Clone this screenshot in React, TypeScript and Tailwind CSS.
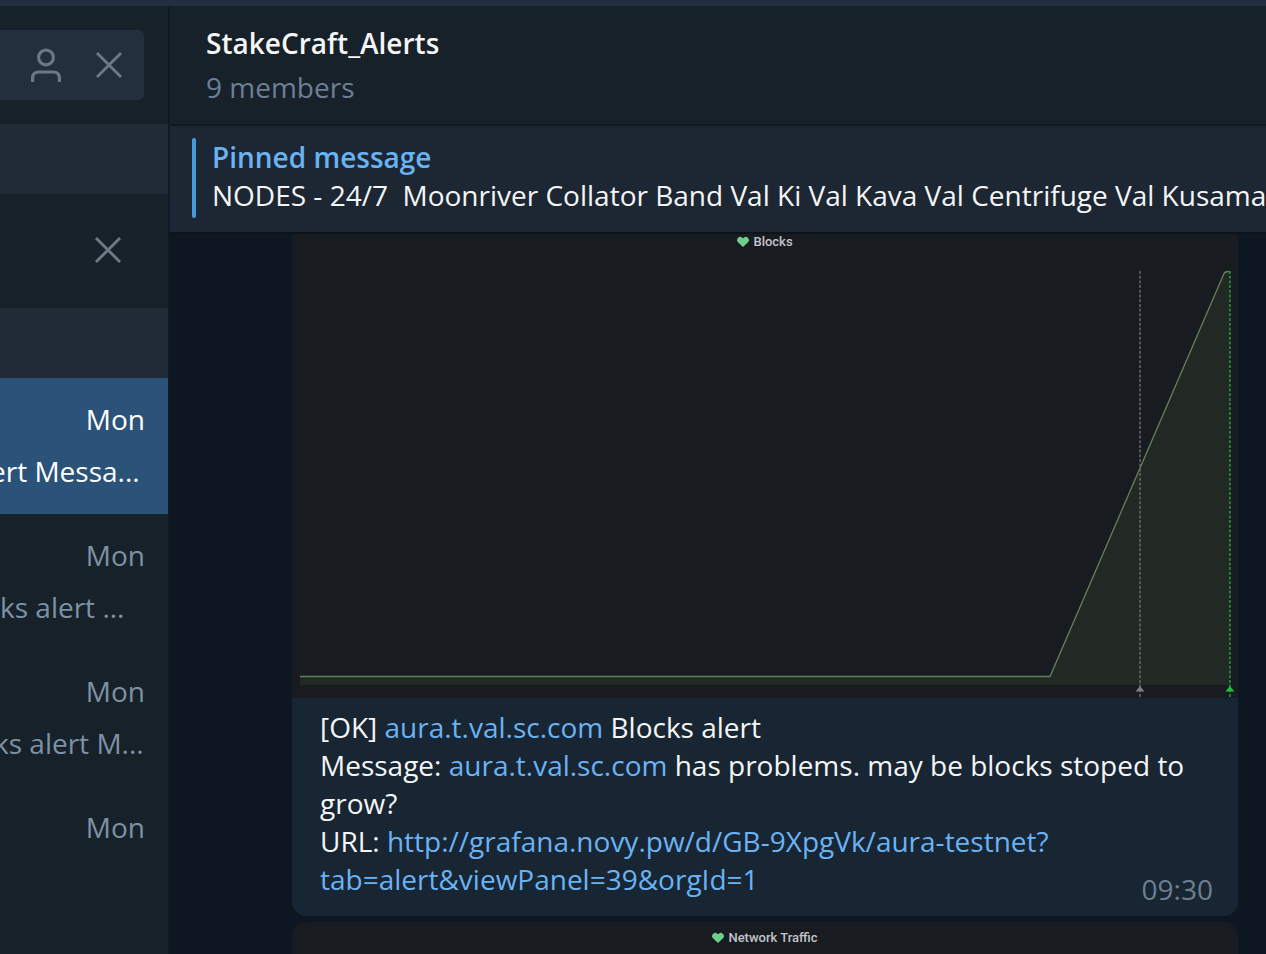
import React from "react";

type Chat = { day: string; preview: string; shift: string; active?: boolean };

const chats: Chat[] = [
  { day: "Mon", preview: "ert Messa...", shift: "-ml-2.5", active: true },
  { day: "Mon", preview: "ks alert ...", shift: "ml-0" },
  { day: "Mon", preview: "ks alert M...", shift: "-ml-1.5" },
  { day: "Mon", preview: "", shift: "ml-0" },
  { day: "Mon", preview: "", shift: "ml-0" },
];

function Cross() {
  return (
    <svg className="block size-8" viewBox="0 0 32 32" fill="none" stroke="currentColor" strokeWidth="2.9" aria-hidden="true">
      <path d="M4 4 L28 28 M28 4 L4 28" />
    </svg>
  );
}

function Person() {
  return (
    <svg className="block h-9 w-8" viewBox="0 0 32 36" fill="none" stroke="currentColor" strokeWidth="3.2" aria-hidden="true">
      <circle cx="16" cy="10.400" r="7.4" />
      <path d="M2.6 35 V31 Q2.6 25 9 25 H23 Q29.4 25 29.4 31 V35" />
    </svg>
  );
}

function Heart() {
  return (
    <svg className="block h-3 w-3" viewBox="0 0 12 12" fill="#6ccf8e" aria-hidden="true">
      <path d="M6 11 L1 6.3 A3.1 3.1 0 0 1 1 2 A3 3 0 0 1 5.3 1.700 L6 2.2 L6.7 1.700 A3 3 0 0 1 11 2 A3.1 3.1 0 0 1 11 6.3 Z" />
    </svg>
  );
}

function PanelTitle({ children }: { children: string }) {
  return (
    <div className="flex items-center justify-center gap-1 font-[Roboto] text-[13px] leading-[15px] font-medium text-[#c3c4cc]">
      <Heart />
      {children}
    </div>
  );
}

function BlocksChart() {
  return (
    <svg className="block h-auto w-full" viewBox="0 0 946 449" fill="none" role="img" aria-label="Blocks">
      <path d="M8 427.500 H758 L932 24.500 Q933 22.500 937 22.500 V436 H8 Z" fill="#222924" />
      <path d="M8 427.500 H758 L932 24.500 Q933 22.500 937 22.500" stroke="#65805a" strokeWidth="1.300" />
      <path d="M848 22 V448" stroke="#66686b" strokeWidth="1.500" strokeDasharray="3 1.700" />
      <path d="M937.900 22 V448" stroke="#218c38" strokeWidth="1.800" strokeDasharray="3 1.700" />
      <path d="M843.500 442.500 L848 437 L852.500 442.500 Z" fill="#7d7e82" />
      <path d="M933.400 442.500 L937.900 437 L942.400 442.500 Z" fill="#1fc043" />
    </svg>
  );
}

function Sidebar() {
  return (
    <aside className="w-[170px] shrink-0 overflow-hidden border-r-2 border-[#101a23] bg-[#17212a]">
      <div className="py-6 pr-6">
        <div className="flex h-[70px] items-center justify-end gap-[31px] rounded-r-md bg-[#242f3d] pr-[19px] text-[#6c7883]">
          <button type="button" aria-label="Search by sender"><Person /></button>
          <button type="button" aria-label="Clear search"><Cross /></button>
        </div>
      </div>
      <div className="h-[70px] bg-[#202b36]" />
      <div className="flex h-[114px] items-center justify-end pr-11 pb-0.5 text-[#6c7883]">
        <button type="button" aria-label="Close chat filter"><Cross /></button>
      </div>
      <div className="h-[70px] bg-[#202b36]" />
      <ul>
        {chats.map((chat, i) => (
          <li key={i} className={chat.active ? "h-[136px] bg-[#2b5278] pt-[22px] text-white" : "h-[136px] pt-[22px] text-[#7f91a4]"}>
            <div className="pr-[23px] text-right leading-[38px]">{chat.day}</div>
            <div className={"mt-[14px] leading-[38px] whitespace-nowrap " + chat.shift}>{chat.preview}</div>
          </li>
        ))}
      </ul>
    </aside>
  );
}

export default function App() {
  const link = "text-[#6ab3f3]";
  return (
    <div className="flex h-screen flex-col overflow-hidden bg-[#0e1621] font-['Open_Sans',sans-serif] text-[28px]">
      <div className="h-1.5 shrink-0 bg-[#242f3d]" />
      <div className="flex min-h-0 flex-1">
        <Sidebar />
        <main className="flex min-w-0 flex-1 flex-col">
          <header className="h-[120px] shrink-0 border-b-2 border-[#101a23] bg-[#17212a] pt-[18px] pl-9">
            <h1 className="leading-[38px] font-semibold text-[#f5f5f5]">StakeCraft_Alerts</h1>
            <p className="mt-1.5 leading-[38px] text-[#6d7f95]">9 members</p>
          </header>
          <section className="flex h-[108px] shrink-0 gap-4 overflow-hidden border-b-2 border-[#0c131b] bg-[#1c2733] pt-3 pl-[22px]">
            <div className="h-20 w-1 shrink-0 rounded-sm bg-[#429bdb]" />
            <div className="leading-[38px] whitespace-pre">
              <h2 className="font-semibold text-[#6ab3f3]">Pinned message</h2>
              <p className="text-[#f5f5f5]">{"NODES - 24/7  Moonriver Collator Band Val Ki Val Kava Val Centrifuge Val Kusama"}</p>
            </div>
          </section>
          <div className="flex min-h-0 flex-1 flex-col gap-1.5 overflow-hidden pr-7 pl-[122px]">
            <article className="shrink-0 overflow-hidden rounded-t-sm rounded-b-[14px] bg-[#182533]">
              <div className="bg-[#181b1f]">
                <PanelTitle>Blocks</PanelTitle>
                <BlocksChart />
              </div>
              <div className="flex h-[218px] items-end justify-between pt-[10px] pr-[25px] pl-7">
                <p className="h-full flex-1 leading-[38px] text-[#f5f5f5]">
                  [OK] <a className={link} href="#aura">aura.t.val.sc.com</a> Blocks alert
                  <br />
                  Message: <a className={link} href="#aura">aura.t.val.sc.com</a> has problems. may be blocks stoped to
                  <br />
                  grow?
                  <br />
                  URL: <a className={link} href="#panel">http://grafana.novy.pw/d/GB-9XpgVk/aura-testnet?<br />tab=alert&amp;viewPanel=39&amp;orgId=1</a>
                </p>
                <time className="-ml-20 pb-2 leading-[38px] text-[#6d7f8f]">09:30</time>
              </div>
            </article>
            <article className="h-[300px] shrink-0 rounded-t-[14px] bg-[#181b1f] pt-2">
              <PanelTitle>Network Traffic</PanelTitle>
            </article>
          </div>
        </main>
      </div>
    </div>
  );
}
